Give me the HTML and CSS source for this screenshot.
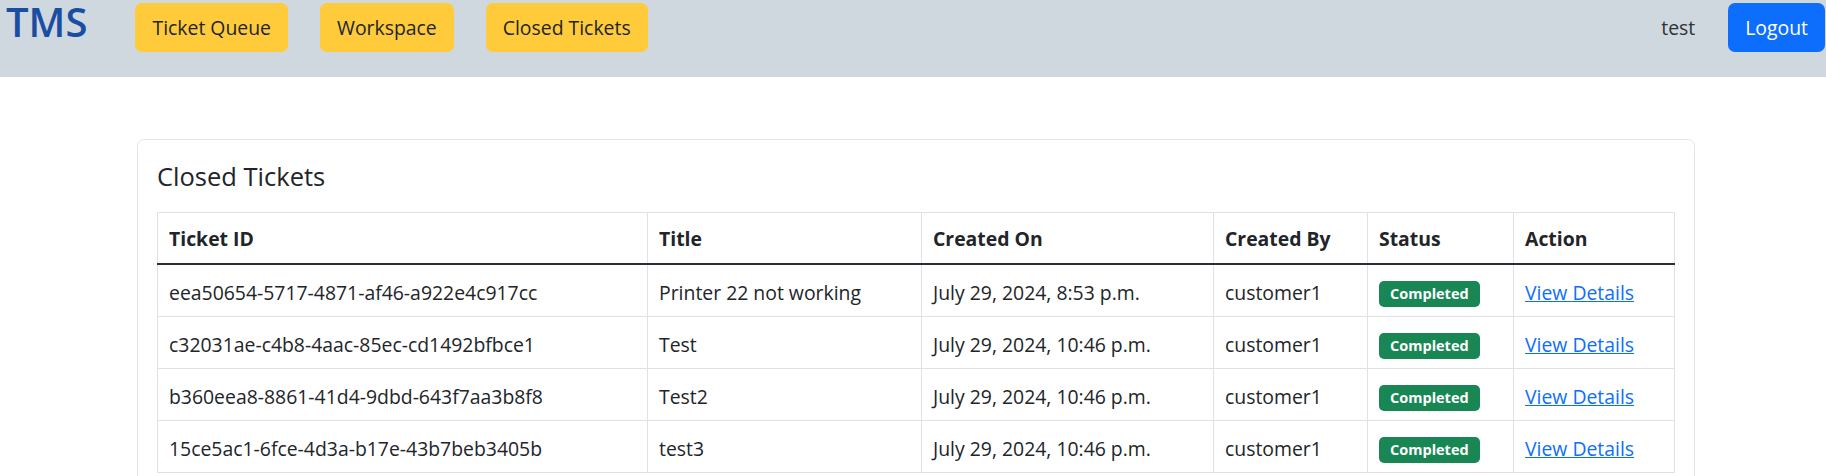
FILE: index.html
```html
<!DOCTYPE html>
<html lang="en">
<head>
<meta charset="utf-8">
<title>TMS - Closed Tickets</title>
<link rel="stylesheet" href="styles.css">
</head>
<body>
<nav class="navbar">
  <a class="brand" href="#">TMS</a>
  <div class="nav-links">
    <a class="btn btn-warning" href="#">Ticket Queue</a>
    <a class="btn btn-warning" href="#">Workspace</a>
    <a class="btn btn-warning" href="#">Closed Tickets</a>
  </div>
  <div class="nav-right">
    <span class="user">test</span>
    <a class="btn btn-primary" href="#">Logout</a>
  </div>
</nav>
<main class="content">
  <div class="card">
    <h4 class="card-title">Closed Tickets</h4>
    <table class="tickets">
      <colgroup>
        <col class="c-id"><col class="c-title"><col class="c-created"><col class="c-by"><col class="c-status"><col class="c-action">
      </colgroup>
      <thead>
        <tr><th>Ticket ID</th><th>Title</th><th>Created On</th><th>Created By</th><th>Status</th><th>Action</th></tr>
      </thead>
      <tbody>
        <tr><td>eea50654-5717-4871-af46-a922e4c917cc</td><td>Printer 22 not working</td><td>July 29, 2024, 8:53 p.m.</td><td>customer1</td><td><span class="badge">Completed</span></td><td><a class="link" href="#">View Details</a></td></tr>
        <tr><td>c32031ae-c4b8-4aac-85ec-cd1492bfbce1</td><td>Test</td><td>July 29, 2024, 10:46 p.m.</td><td>customer1</td><td><span class="badge">Completed</span></td><td><a class="link" href="#">View Details</a></td></tr>
        <tr><td>b360eea8-8861-41d4-9dbd-643f7aa3b8f8</td><td>Test2</td><td>July 29, 2024, 10:46 p.m.</td><td>customer1</td><td><span class="badge">Completed</span></td><td><a class="link" href="#">View Details</a></td></tr>
        <tr><td>15ce5ac1-6fce-4d3a-b17e-43b7beb3405b</td><td>test3</td><td>July 29, 2024, 10:46 p.m.</td><td>customer1</td><td><span class="badge">Completed</span></td><td><a class="link" href="#">View Details</a></td></tr>
      </tbody>
    </table>
  </div>
</main>
</body>
</html>
```
FILE: styles.css
```css
* { box-sizing: border-box; }
html, body { margin: 0; padding: 0; }
body {
  font-family: "Open Sans", "Noto Sans", sans-serif;
  font-size: 19.4px;
  color: #212529;
  background: #ffffff;
}
.navbar {
  display: flex;
  align-items: flex-start;
  height: 77px;
  background: #cfd8de;
  padding: 0 1px 0 6px;
}
.brand {
  font-size: 40px;
  line-height: 44px;
  font-weight: 600;
  color: #1a4ea2;
  text-decoration: none;
  margin-top: 0;
  margin-right: 48px;
}
.nav-links {
  display: flex;
  gap: 32px;
  margin-top: 3px;
}
.btn {
  display: inline-flex;
  align-items: center;
  justify-content: center;
  height: 49px;
  padding: 0 17px;
  border-radius: 7px;
  font-size: 19.4px;
  text-decoration: none;
  white-space: nowrap;
}
.btn-warning { background: #ffcb3a; color: #212529; }
.btn-primary { background: #0d6efd; color: #ffffff; }
.nav-right {
  margin-left: auto;
  display: flex;
  align-items: center;
  gap: 33px;
  margin-top: 3px;
}
.user { color: #2f3236; }
.content {
  padding: 62px 131px 0 137px;
}
.card {
  border: 1px solid #e1e4e8;
  border-radius: 7px;
  padding: 19px 20px 19px 19px;
  background: #fff;
}
.card-title {
  margin: 0 0 19px;
  font-size: 25.5px;
  line-height: 34px;
  font-weight: 500;
}
.tickets {
  width: 100%;
  border-collapse: collapse;
  table-layout: fixed;
}
.c-id { width: 490px; }
.c-title { width: 274px; }
.c-created { width: 292px; }
.c-by { width: 154px; }
.c-status { width: 146px; }
.c-action { width: 161px; }
.tickets th, .tickets td {
  border: 1px solid #dee2e6;
  line-height: 29px;
  text-align: left;
  vertical-align: top;
  white-space: nowrap;
}
.tickets th { font-weight: 700; padding: 11px 12px 10px 11px; }
.tickets thead th { border-bottom: 2px solid #2b2f33; }
.tickets td { padding: 13px 12px 9px 11px; }
.badge {
  display: inline-block;
  background: #198754;
  color: #fff;
  font-size: 14.5px;
  font-weight: 700;
  line-height: 26px;
  padding: 0 11px;
  border-radius: 5px;
  vertical-align: top;
  margin-top: 3px;
}
.link { color: #0d6efd; text-decoration: underline; }
```
